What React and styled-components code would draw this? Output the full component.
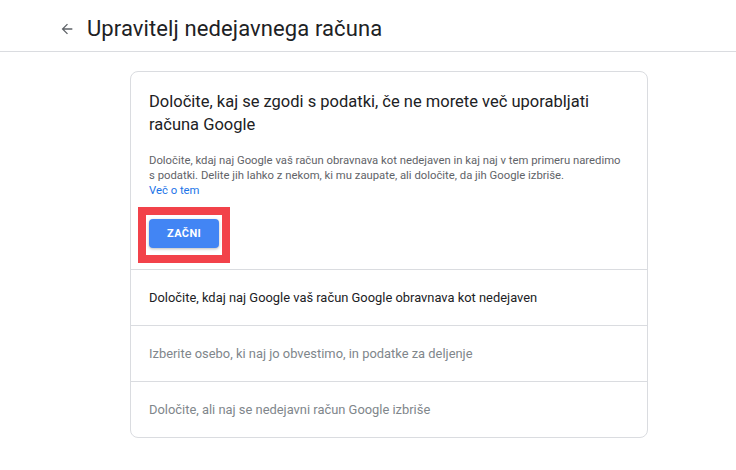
import React from 'react';
import styled, { createGlobalStyle } from 'styled-components';

const GlobalStyle = createGlobalStyle`
	body {
		margin: 0;
		background: #fff;
		font-family: Roboto, 'Liberation Sans', Arial, sans-serif;
	}
`;

const Page = styled.div`
	width: 736px;
	height: 470px;
	overflow: hidden;
`;

const Header = styled.header`
	display: flex;
	align-items: center;
	height: 52px;
	padding-left: 57px;
	border-bottom: 1px solid #dadce0;
	box-sizing: border-box;
	padding-top: 6px;
`;

const BackButton = styled.button`
	display: flex;
	align-items: center;
	justify-content: center;
	width: 20px;
	height: 20px;
	padding: 0;
	margin-right: 10px;
	border: none;
	background: none;
	color: #5f6368;
	cursor: pointer;
`;

const Title = styled.h1`
	margin: 0;
	font-size: 22px;
	font-weight: 400;
	color: #202124;
	letter-spacing: 0.1px;
`;

const Card = styled.section`
	width: 518px;
	margin: 19px 0 0 130px;
	border: 1px solid #dadce0;
	border-radius: 8px;
	box-sizing: border-box;
`;

const Intro = styled.div`
	padding: 18px 24px 6px 18px;
	border-bottom: 1px solid #dadce0;
`;

const Heading = styled.h2`
	margin: 0;
	font-size: 16.5px;
	font-weight: 400;
	line-height: 23px;
	color: #202124;
`;

const Body = styled.p`
	margin: 17px 0 0;
	font-size: 11.3px;
	line-height: 15px;
	color: #5f6368;
`;

const Link = styled.a`
	color: #1a73e8;
	text-decoration: none;
`;

const Highlight = styled.div`
	display: inline-block;
	margin: 9px 0 0 -11px;
	padding: 4px 3px 7px 3px;
	border: 8px solid #f2424a;
`;

const StartButton = styled.button`
	display: block;
	height: 29px;
	padding: 0 18px;
	border: none;
	border-radius: 4px;
	background: #4285f4;
	color: #fff;
	font-family: inherit;
	font-size: 11px;
	font-weight: 700;
	letter-spacing: 0.4px;
	box-shadow: 0 1px 3px rgba(60, 64, 67, 0.35);
	cursor: pointer;
`;

const Step = styled.div`
	display: flex;
	align-items: center;
	height: 55px;
	padding: 0 18px;
	font-size: 12.9px;
	color: ${(p) => (p.$active ? '#202124' : '#80868b')};
	border-bottom: ${(p) => (p.$last ? 'none' : '1px solid #dadce0')};
`;

const steps = [
	'Določite, kdaj naj Google vaš račun Google obravnava kot nedejaven',
	'Izberite osebo, ki naj jo obvestimo, in podatke za deljenje',
	'Določite, ali naj se nedejavni račun Google izbriše',
];

const App = () => {
	return (
		<>
			<GlobalStyle />
			<Page>
				<Header>
					<BackButton aria-label='Nazaj'>
						<svg width='16' height='16' viewBox='0 0 24 24' fill='currentColor'>
							<path d='M20 11H7.83l5.59-5.59L12 4l-8 8 8 8 1.41-1.41L7.83 13H20v-2z' />
						</svg>
					</BackButton>
					<Title>Upravitelj nedejavnega računa</Title>
				</Header>
				<Card>
					<Intro>
						<Heading>
							Določite, kaj se zgodi s podatki, če ne morete več uporabljati
							računa Google
						</Heading>
						<Body>
							Določite, kdaj naj Google vaš račun obravnava kot nedejaven in kaj
							naj v tem primeru naredimo s podatki. Delite jih lahko z nekom, ki
							mu zaupate, ali določite, da jih Google izbriše.
							<br />
							<Link href='#'>Več o tem</Link>
						</Body>
						<Highlight>
							<StartButton>ZAČNI</StartButton>
						</Highlight>
					</Intro>
					{steps.map((s, i) => (
						<Step key={i} $active={i === 0} $last={i === steps.length - 1}>
							{s}
						</Step>
					))}
				</Card>
			</Page>
		</>
	);
};

export default App;
